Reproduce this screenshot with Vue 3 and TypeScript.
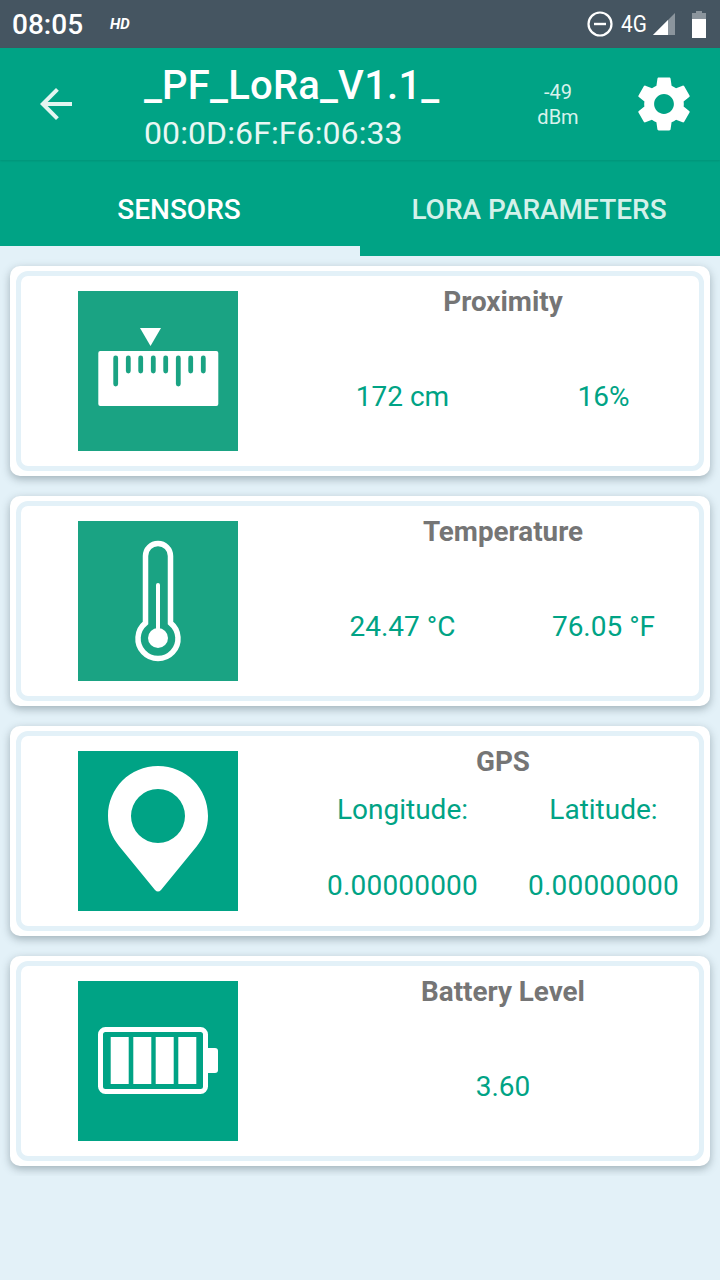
<script setup lang="ts">
interface Reading {
  label?: string;
  value: string;
}

interface Sensor {
  title: string;
  kind: 'ruler' | 'thermo' | 'pin' | 'battery';
  tint: string;
  readings: Reading[];
}

const rulerTicks = [
  { x: 37.7, long: true },
  { x: 50.3, long: false },
  { x: 62.7, long: false },
  { x: 75.3, long: false },
  { x: 87.7, long: false },
  { x: 100.3, long: true },
  { x: 112.7, long: false },
  { x: 125.3, long: false }
];

const batteryCells = [32.7, 55.3, 77.7, 100.3];

const sensors: Sensor[] = [
  { title: 'Proximity', kind: 'ruler', tint: '#1aa383', readings: [{ value: '172 cm' }, { value: '16%' }] },
  { title: 'Temperature', kind: 'thermo', tint: '#1aa383', readings: [{ value: '24.47 °C' }, { value: '76.05 °F' }] },
  {
    title: 'GPS',
    kind: 'pin',
    tint: '#00a385',
    readings: [
      { label: 'Longitude:', value: '0.00000000' },
      { label: 'Latitude:', value: '0.00000000' }
    ]
  },
  { title: 'Battery Level', kind: 'battery', tint: '#00a385', readings: [{ value: '3.60' }] }
];
</script>

<template>
  <div class="screen">
    <div class="status">
      <span class="clock">08:05</span>
      <span class="hd">HD</span>
      <span class="status-right">
        <svg class="dnd" width="26" height="26" viewBox="0 0 26 26">
          <circle cx="13" cy="13" r="11.5" fill="none" stroke="#fff" stroke-width="2.2" />
          <rect x="7" y="11.8" width="12" height="2.4" fill="#fff" />
        </svg>
        <span class="net">4G</span>
        <svg class="signal" width="23" height="23" viewBox="0 0 23 23">
          <path d="M22 0v22H0z" fill="#8b959d" />
          <path d="M15 7v15H0z" fill="#fff" />
        </svg>
        <svg class="batt" width="14" height="27" viewBox="0 0 14 27">
          <path d="M4 0h6v2h4v25H0V2h4z" fill="#8b959d" />
          <rect y="8" width="14" height="19" fill="#fff" />
        </svg>
      </span>
    </div>

    <header class="toolbar">
      <svg class="back" width="48" height="48" viewBox="0 0 24 24">
        <path d="M20 11H7.83l5.59-5.59L12 4l-8 8 8 8 1.41-1.41L7.83 13H20v-2z" fill="#e3f5f1" />
      </svg>
      <div class="titles">
        <div class="name">_PF_LoRa_V1.1_</div>
        <div class="mac">00:0D:6F:F6:06:33</div>
      </div>
      <div class="rssi">-49<br />dBm</div>
      <svg class="gear" width="66" height="66" viewBox="0 0 24 24">
        <path
          fill="#fff"
          d="M19.14 12.94c.04-.3.06-.61.06-.94 0-.32-.02-.64-.07-.94l2.03-1.58c.18-.14.23-.41.12-.61l-1.92-3.32c-.12-.22-.37-.29-.59-.22l-2.39.96c-.5-.38-1.03-.7-1.62-.94l-.36-2.54c-.04-.24-.24-.41-.48-.41h-3.84c-.24 0-.43.17-.47.41l-.36 2.54c-.59.24-1.13.57-1.62.94l-2.39-.96c-.22-.08-.47 0-.59.22L2.74 8.87c-.12.21-.08.47.12.61l2.03 1.58c-.05.3-.09.63-.09.94s.02.64.07.94l-2.03 1.58c-.18.14-.23.41-.12.61l1.92 3.32c.12.22.37.29.59.22l2.39-.96c.5.38 1.03.7 1.62.94l.36 2.54c.05.24.24.41.48.41h3.84c.24 0 .44-.17.47-.41l.36-2.54c.59-.24 1.13-.56 1.62-.94l2.39.96c.22.08.47 0 .59-.22l1.92-3.32c.12-.22.07-.47-.12-.61l-2.01-1.58zM12 15.6c-1.98 0-3.6-1.62-3.6-3.6s1.62-3.6 3.6-3.6 3.6 1.62 3.6 3.6-1.62 3.6-3.6 3.6z"
        />
      </svg>
    </header>

    <nav class="tabs">
      <div class="tab active">SENSORS</div>
      <div class="tab">LORA PARAMETERS</div>
    </nav>

    <main class="list">
      <section v-for="s in sensors" :key="s.title" class="card">
        <div class="inner">
          <div class="tile" :style="{ backgroundColor: s.tint }">
            <svg width="160" height="160" viewBox="0 0 160 160">
              <g v-if="s.kind === 'ruler'">
                <path d="M62 37h21l-10.500 18z" fill="#fff" />
                <rect x="20.300" y="60" width="120" height="55" rx="2" fill="#fff" />
                <line
                  v-for="t in rulerTicks"
                  :key="t.x"
                  :x1="t.x"
                  :x2="t.x"
                  y1="67"
                  :y2="t.long ? 93 : 80"
                  :stroke="s.tint"
                  stroke-width="4.800"
                  stroke-linecap="round"
                />
              </g>
              <g v-else-if="s.kind === 'thermo'">
                <path
                  d="M67.500 102V35a12.500 12.500 0 0 1 25 0v67a20 20 0 1 1-25 0z"
                  fill="none"
                  stroke="#fff"
                  stroke-width="5.500"
                />
                <line x1="80" y1="64" x2="80" y2="117" stroke="#fff" stroke-width="4" stroke-linecap="round" />
                <circle cx="80" cy="117" r="10" fill="#fff" />
              </g>
              <path
                v-else-if="s.kind === 'pin'"
                fill="#fff"
                fill-rule="evenodd"
                d="M80 15C52 15 30 37 30 65c0 12 4 21 11 30l36 44q3 3 6 0l36-44c7-9 11-18 11-30 0-28-22-50-50-50zM80 38a27 27 0 1 1 0 54 27 27 0 1 1 0-54z"
              />
              <g v-else>
                <rect x="22.500" y="48.500" width="105" height="62" rx="5" fill="none" stroke="#fff" stroke-width="5" />
                <rect v-for="x in batteryCells" :key="x" :x="x" y="56" width="18" height="47" fill="#fff" />
                <path d="M130 67h7a3 3 0 0 1 3 3v19a3 3 0 0 1-3 3h-7z" fill="#fff" />
              </g>
            </svg>
          </div>
          <div class="data">
            <h3 class="title">{{ s.title }}</h3>
            <div class="readings">
              <div v-for="r in s.readings" :key="r.value + r.label" class="reading" :class="{ labelled: r.label }">
                <div v-if="r.label" class="label">{{ r.label }}</div>
                <div class="value">{{ r.value }}</div>
              </div>
            </div>
          </div>
        </div>
      </section>
    </main>
  </div>
</template>

<style scoped>
.screen {
  width: 720px;
  height: 1280px;
  overflow: hidden;
  background: #e3f1f8;
  font-family: Roboto, "Noto Sans", sans-serif;
}

.status {
  height: 48px;
  background: #455561;
  color: #fff;
  display: flex;
  align-items: center;
  padding: 0 14px 0 12px;
}

.clock {
  font-size: 28px;
  font-weight: 500;
}

.hd {
  margin-left: 27px;
  font-size: 15px;
  font-weight: 700;
  font-style: italic;
}

.status-right {
  margin-left: auto;
  display: flex;
  align-items: center;
}

.net {
  margin-left: 8px;
  font-size: 23px;
  transform: scaleX(0.9);
  transform-origin: left;
  width: 26px;
}

.signal {
  margin-left: 6px;
}

.batt {
  margin-left: 16px;
}

.toolbar {
  position: relative;
  z-index: 1;
  height: 112px;
  box-sizing: border-box;
  background: #00a385;
  color: #fff;
  display: flex;
  align-items: center;
  padding-left: 32px;
  box-shadow: 0 1px 2px rgba(0, 0, 0, 0.1);
}

.titles {
  margin-left: 64px;
  width: 360px;
  padding-top: 6px;
}

.name {
  font-size: 40px;
  font-weight: 500;
  line-height: 48px;
  letter-spacing: 0.2px;
}

.mac {
  font-size: 32px;
  line-height: 42px;
  margin-top: 2px;
  margin-bottom: -2px;
  letter-spacing: 0.1px;
  color: #e8f7f4;
}

.rssi {
  width: 60px;
  margin-left: 24px;
  padding-top: 2px;
  text-align: center;
  font-size: 20px;
  line-height: 25px;
  color: #d8f2ec;
}

.gear {
  margin-left: 43px;
}

.tabs {
  height: 96px;
  display: flex;
  background: #00a385;
}

.tab {
  flex: 1;
  display: flex;
  align-items: center;
  justify-content: center;
  padding: 2px 2px 0 0;
  box-sizing: border-box;
  font-size: 28px;
  font-weight: 500;
  color: #d4f1ea;
}

.tab.active {
  color: #fff;
  padding-top: 12px;
  height: 86px;
  margin-bottom: 10px;
  box-shadow: 0 10px 0 #e3f1f8;
}

.list {
  overflow: hidden;
  padding: 10px 10px;
  display: flex;
  flex-direction: column;
  gap: 20px;
}

.card {
  height: 210px;
  flex: none;
  box-sizing: border-box;
  padding: 5px 6px;
  background: #fff;
  border-radius: 10px;
  box-shadow: 0 3px 8px rgba(60, 80, 90, 0.4);
}

.inner {
  height: 100%;
  box-sizing: border-box;
  border: 5px solid #e3f1f8;
  border-radius: 12px;
  display: flex;
}

.tile {
  width: 160px;
  height: 160px;
  margin: 15px 0 0 57px;
  flex: none;
}

.tile svg {
  display: block;
}

.data {
  margin-left: 64px;
  width: 402px;
  flex: none;
  display: flex;
  flex-direction: column;
}

.title {
  margin: 0;
  height: 50px;
  line-height: 52px;
  text-align: center;
  font-size: 27.8px;
  font-weight: 700;
  color: #757575;
}

.readings {
  height: 140px;
  display: flex;
}

.reading {
  flex: 1;
  text-align: center;
  color: #00a385;
  font-size: 28px;
  line-height: 142px;
}

.reading.labelled {
  line-height: normal;
}

.label {
  height: 46px;
  line-height: 48px;
}

.labelled .value {
  padding-top: 13px;
  height: 82px;
  line-height: 82px;
  letter-spacing: 0.2px;
}
</style>
